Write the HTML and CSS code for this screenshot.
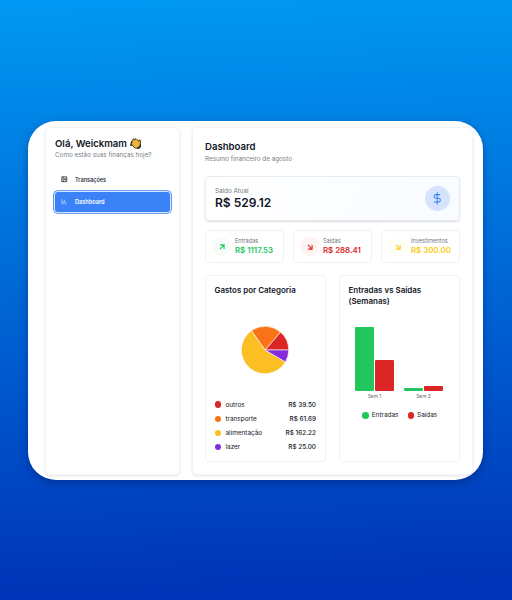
FILE: index.html
```html
<!DOCTYPE html>
<html lang="pt-BR">
<head>
<meta charset="utf-8">
<title>Dashboard</title>
<link rel="stylesheet" href="styles.css">
</head>
<body>
<div class="window">
  <aside class="panel sidebar">
    <h1 class="greeting">Olá, Weickmam
      <svg class="wave" viewBox="0 0 24 24"><path d="M3 10 8 3M2 15l2-6M16 22l5-4M20 20l2-6" stroke="#25262b" stroke-width="3.500" stroke-linecap="round"/><path d="M6 4q2-3 4 0l1-2q2-1 3 1l4 4 1-3q3-1 3 3l-1 8-5 6q-5 1-8-2l-4-5q-2-3 0-4-1-4 2-6Z" fill="#f6b83c" stroke="#3b321f" stroke-width="2"/><path d="m7 8 5 6M11 6l5 6M6 12l4 4" stroke="#d99c2c" fill="none"/></svg>
    </h1>
    <p class="sub">Como estão suas finanças hoje?</p>
    <nav>
      <a class="link">
        <svg class="nav-icon" viewBox="0 0 24 24"><path d="M3 3h18v18H3ZM8 3v18M17 7l-5 5 5 5M12 12h8"/></svg>
        <span>Transações</span>
      </a>
      <a class="link active">
        <svg class="nav-icon thin" viewBox="0 0 24 24"><path d="M3 3v18h18M8 17V10M13 17V6M18 17v-4"/></svg>
        <span>Dashboard</span>
      </a>
    </nav>
  </aside>
  <main class="panel content">
    <h2 class="title">Dashboard</h2>
    <p class="sub">Resumo financeiro de agosto</p>
    <section class="balance">
      <div class="balance-text"><div class="label">Saldo Atual</div><div class="total">R$ 529.12</div></div>
      <div class="coin"><svg viewBox="0 0 24 24"><path d="M12 1v22M17 5H9.500a3.500 3.500 0 0 0 0 7h5a3.500 3.500 0 0 1 0 7H6"/></svg></div>
    </section>
    <section class="stats">
      <div class="stat green"><span class="dot"><svg viewBox="0 0 24 24"><path d="M7 7h10v10M7 17 17 7"/></svg></span><div class="stat-text"><div class="stat-label">Entradas</div><div class="amount">R$ 1117.53</div></div></div>
      <div class="stat red"><span class="dot"><svg viewBox="0 0 24 24"><path d="m7 7 10 10M17 7v10H7"/></svg></span><div class="stat-text"><div class="stat-label">Saídas</div><div class="amount">R$ 288.41</div></div></div>
      <div class="stat yellow"><span class="dot"><svg viewBox="0 0 24 24"><path d="m7 7 10 10M17 7v10H7"/></svg></span><div class="stat-text"><div class="stat-label">Investimentos</div><div class="amount">R$ 300.00</div></div></div>
    </section>
    <section class="charts">
      <div class="card">
        <h3>Gastos por Categoria</h3>
        <svg class="pie" viewBox="-24 -24 48 48">
          <path fill="#dc2626" d="M0 0H23.700A23.700 23.700 0 0 0 15.500 -17.900Z"/>
          <path fill="#f97316" d="M0 0 15.500 -17.900A23.700 23.700 0 0 0 -13.600 -19.400Z"/>
          <path fill="#fbbf24" d="M0 0 -13.600 -19.400A23.700 23.700 0 1 0 20.500 11.900Z"/>
          <path fill="#8529dc" d="M0 0 20.500 11.900A23.700 23.700 0 0 0 23.700 0Z"/>
        </svg>
        <ul class="categories">
          <li><i class="c-red"></i><span>outros</span><b>R$ 39.50</b></li>
          <li><i class="c-orange"></i><span>transporte</span><b>R$ 61.69</b></li>
          <li><i class="c-yellow"></i><span>alimentação</span><b>R$ 162.22</b></li>
          <li><i class="c-purple"></i><span>lazer</span><b>R$ 25.00</b></li>
        </ul>
      </div>
      <div class="card">
        <h3>Entradas vs Saídas (Semanas)</h3>
        <div class="bars">
          <div class="week"><div class="pair"><i class="bar c-green" style="height:64.500px"></i><i class="bar c-red" style="height:31px"></i></div><span>Sem 1</span></div>
          <div class="week"><div class="pair"><i class="bar c-green" style="height:3.500px"></i><i class="bar c-red" style="height:5.500px"></i></div><span>Sem 2</span></div>
        </div>
        <div class="legend"><span><i class="c-green"></i>Entradas</span><span><i class="c-red"></i>Saídas</span></div>
      </div>
    </section>
  </main>
</div>
</body>
</html>
```

FILE: styles.css
```css
* { box-sizing: border-box; margin: 0; padding: 0; }
body {
  height: 600px;
  padding: 121px 29px 0 28px;
  background: linear-gradient(178deg, #0099f5 0%, #0096f0 3%, #0034b8 96%, #0034b8 100%);
  font-family: Inter, "Liberation Sans", sans-serif;
  color: #101625;
  overflow: hidden;
}
.window {
  height: 359px;
  padding: 6px 10px 5px 17px;
  display: grid;
  grid-template-columns: 135px 281px;
  gap: 12px;
  background: #fff;
  border-radius: 28px;
  box-shadow: 0 3px 8px rgba(0, 15, 70, .35);
  overflow: hidden;
}
.panel {
  background: #fff;
  border: 1px solid #f3f4f6;
  border-radius: 5px;
  box-shadow: 0 1px 3px rgba(0, 0, 0, .1);
}
.sidebar { padding: 9px 9px 0 9px; }
.greeting { display: flex; align-items: center; gap: 2.500px; font-size: 9.600px; line-height: 13px; font-weight: 600; white-space: nowrap; }
.wave { width: 11.500px; height: 11.500px; fill: none; }
.sub { font-size: 6.320px; line-height: 11px; color: #777d88; white-space: nowrap; }
nav { display: grid; gap: 2px; margin-top: 8.500px; }
.link { display: flex; align-items: center; height: 20px; gap: 7.500px; padding-left: 6px; font-size: 5.600px; font-weight: 500; }
.link.active { color: #fff; background: #3b82f6; border-radius: 3px; font-weight: 600; box-shadow: 0 0 0 1px #d5e5ff, 0 0 0 1.800px #3b82f6; }
.nav-icon { width: 6.500px; height: 6.500px; fill: none; stroke: currentColor; stroke-width: 2.700; }
.thin { stroke-width: 1.800; }
.content { padding: 12px 12px 0; }
.title { font-size: 9.600px; line-height: 13px; font-weight: 600; }
.content > .sub { margin-top: 1px; }
.balance {
  height: 45px;
  margin-top: 11px;
  padding: 0 9px;
  display: flex;
  align-items: center;
  justify-content: space-between;
  border: 1px solid #e8ebf0;
  border-radius: 4px;
  background: linear-gradient(110deg, #fff 0%, #f8fbff 100%);
  box-shadow: 0 1px 2px rgba(0, 0, 0, .14);
}
.label { font-size: 6.300px; line-height: 9px; color: #727985; }
.total { font-size: 12px; line-height: 14px; font-weight: 600; }
.coin { width: 25px; height: 25px; display: grid; place-items: center; border-radius: 50%; background: #d5e3fc; }
.coin svg { width: 12.500px; height: 12.500px; fill: none; stroke: #3b82f6; stroke-width: 2; stroke-linecap: round; }
.stats { margin-top: 9px; display: grid; grid-template-columns: repeat(3, 1fr); gap: 9px; }
.stat { height: 33px; display: flex; align-items: center; gap: 4px; padding-left: 6px; border: 1px solid #eff1f4; border-radius: 4px; white-space: nowrap; }
.stat-text { padding-bottom: 1px; }
.dot { width: 19px; height: 19px; flex: none; display: grid; place-items: center; border-radius: 50%; }
.dot svg { width: 10px; height: 10px; fill: none; stroke: currentColor; stroke-width: 2.700; }
.stat-label { font-size: 5.600px; line-height: 9px; color: #727985; }
.amount { font-size: 7.850px; line-height: 9px; font-weight: 600; }
.green { color: #22c55e; }
.green .dot { background: #f6fdf8; }
.red { color: #dc2626; }
.red .dot { background: #fef2f2; }
.yellow { color: #facc15; }
.yellow .dot { background: #fffef6; }
.charts { margin-top: 12px; display: grid; grid-template-columns: 1fr 1fr; gap: 13px; }
.card { height: 187px; border: 1px solid #eff1f4; border-radius: 4px; padding: 9px 9px 0 8.500px; display: flex; flex-direction: column; }
h3 { font-size: 7.950px; line-height: 11px; font-weight: 600; }
.pie { flex: none; width: 48px; height: 48px; margin: 29.500px 0 0 26.500px; stroke: #fff; stroke-width: .6; }
.categories { list-style: none; margin-top: 24px; font-size: 6.400px; }
.categories li { display: flex; align-items: center; height: 14.200px; }
.categories i, .legend i { width: 6.500px; height: 6.500px; border-radius: 50%; margin-right: 4.500px; }
.categories b { margin-left: auto; font-weight: 500; }
.c-red { background: #dc2626; }
.c-orange { background: #f97316; }
.c-yellow { background: #fbbf24; }
.c-purple { background: #8529dc; }
.c-green { background: #22c55e; }
.bars { display: flex; gap: 10px; margin: 18px 0 0 6.500px; }
.week { width: 39px; text-align: center; font-size: 4.900px; line-height: 8px; color: #666; }
.pair { height: 66px; display: flex; align-items: flex-end; gap: 1.500px; margin-bottom: 1px; }
.bar { width: 18.750px; border-radius: 1px; }
.legend { display: flex; justify-content: center; gap: 9px; margin: 11px 0 0 1px; font-size: 6.450px; line-height: 9px; }
.legend span { display: flex; align-items: center; }
.legend i { margin-right: 3px; }
```
